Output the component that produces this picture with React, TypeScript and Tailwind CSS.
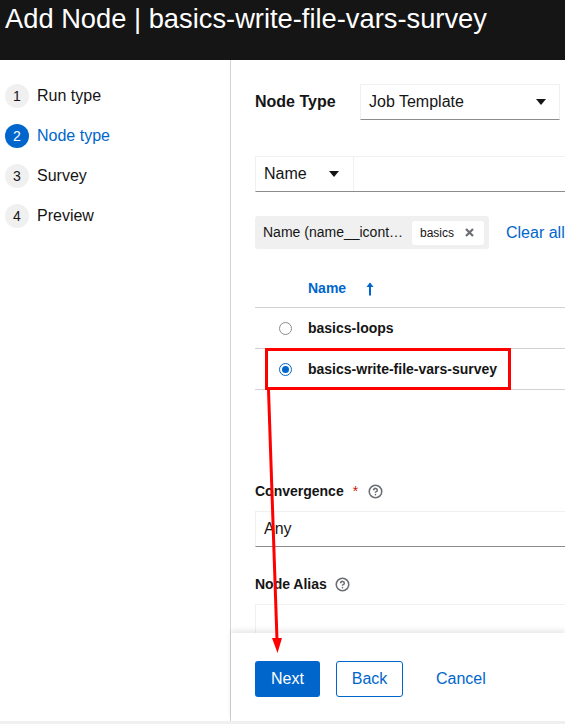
import { CircleHelp } from "lucide-react";

const steps = [
  { n: 1, label: "Run type" },
  { n: 2, label: "Node type", active: true },
  { n: 3, label: "Survey" },
  { n: 4, label: "Preview" },
];

function Caret() {
  return (
    <svg width="10" height="6" viewBox="0 0 10 6" className="shrink-0">
      <path d="M0 0h10L5 6z" fill="#151515" />
    </svg>
  );
}

function Radio({ checked }: { checked?: boolean }) {
  if (checked) {
    return (
      <span className="flex h-[13px] w-[13px] items-center justify-center rounded-full border-[1.5px] border-[#0066cc] bg-white">
        <span className="h-[7px] w-[7px] rounded-full bg-[#0066cc]" />
      </span>
    );
  }
  return <span className="h-[13px] w-[13px] rounded-full border border-[#8a8d90] bg-white" />;
}

function Help() {
  return <CircleHelp size={15} strokeWidth={2.5} color="#6a6e73" />;
}

export default function App() {
  return (
    <div className="relative flex h-[724px] w-[565px] flex-col overflow-hidden bg-white font-['Liberation_Sans',Arial,sans-serif] text-[#151515]">
      <header className="h-[60px] shrink-0 bg-[#151515] pl-[5px] pt-[1px] text-[27.3px] leading-[36px] text-white whitespace-nowrap">
        Add Node | basics-write-file-vars-survey
      </header>

      <div className="flex min-h-0 flex-1">
        <nav className="w-[231px] shrink-0 border-r border-[#d2d2d2] pl-[5px] pt-[16px]">
          {steps.map((s) => (
            <div key={s.n} className="flex h-10 items-center gap-2">
              <span
                className={
                  s.active
                    ? "flex h-6 w-6 items-center justify-center rounded-full bg-[#0066cc] text-[14px] text-white"
                    : "flex h-6 w-6 items-center justify-center rounded-full bg-[#f0f0f0] text-[14px] text-[#151515]"
                }
              >
                {s.n}
              </span>
              <span className={s.active ? "text-[16px] text-[#0066cc]" : "text-[16px] text-[#151515]"}>
                {s.label}
              </span>
            </div>
          ))}
        </nav>

        <main className="flex min-w-0 flex-1 flex-col">
          <div className="min-h-0 flex-1 overflow-hidden pl-[24px] pt-[24px]">
            <div className="flex items-center">
              <span className="w-[105px] text-[16px] font-bold">Node Type</span>
              <div className="flex h-[36px] w-[200px] items-center justify-between border border-[#f0f0f0] border-b-[#8a8d90] pl-[8px] pr-[13px] text-[16px]">
                Job Template
                <Caret />
              </div>
            </div>

            <div className="mt-[36px] flex h-[36px] border border-r-0 border-[#f0f0f0] border-b-[#8a8d90]">
              <div className="flex w-[98px] items-center justify-between border-r border-[#f0f0f0] pl-[8px] pr-[14px] text-[16px]">
                Name
                <Caret />
              </div>
              <div className="flex-1" />
            </div>

            <div className="mt-[24px] flex items-center whitespace-nowrap">
              <div className="flex h-[33px] w-[234px] items-center rounded-[3px] bg-[#f0f0f0] pl-[8px] text-[14px]">
                <span className="w-[149px]">Name (name__icont…</span>
                <span className="flex h-[24px] w-[72px] items-center justify-between rounded-[3px] bg-white pl-[8px] pr-[10px] text-[12px]">
                  basics
                  <svg width="9" height="9" viewBox="0 0 9 9">
                    <path d="M1 1l7 7M8 1l-7 7" stroke="#6a6e73" strokeWidth="2.2" />
                  </svg>
                </span>
              </div>
              <span className="ml-[17px] text-[16px] text-[#0066cc]">Clear all</span>
            </div>

            <div className="flex h-[59px] items-center border-b border-[#d2d2d2] pl-[53px] pt-[21px] text-[14px] font-bold text-[#0066cc]">
              Name
              <svg width="8" height="14" viewBox="0 0 8 14" className="ml-[20px]">
                <path d="M4 1.5V13.5" stroke="#0066cc" strokeWidth="2" />
                <path d="M0.5 5L4 0.5L7.5 5z" fill="#0066cc" />
              </svg>
            </div>
            <div className="flex h-[41px] items-center border-b border-[#d2d2d2] pl-[24px] text-[14px] font-bold">
              <Radio />
              <span className="ml-[16px]">basics-loops</span>
            </div>
            <div className="flex h-[41px] items-center border-b border-[#d2d2d2] pl-[24px] text-[14px] font-bold">
              <Radio checked />
              <span className="ml-[16px]">basics-write-file-vars-survey</span>
            </div>

            <div className="mt-[91px] flex h-[20px] items-center text-[14px] font-bold">
              Convergence
              <span className="ml-[9px] font-normal text-[#c9190b]">*</span>
              <span className="ml-[10px]">
                <Help />
              </span>
            </div>
            <div className="mt-[10px] flex h-[36px] items-center border border-r-0 border-[#f0f0f0] border-b-[#8a8d90] pl-[8px] text-[16px]">
              Any
            </div>

            <div className="mt-[27px] flex h-[20px] items-center text-[14px] font-bold">
              Node Alias
              <span className="ml-[8px]">
                <Help />
              </span>
            </div>
            <div className="mt-[10px] h-[36px] border border-r-0 border-[#f0f0f0] border-b-[#8a8d90]" />
          </div>

          <footer className="relative flex h-[88px] shrink-0 items-center gap-4 bg-white pl-[24px] pt-[4px] shadow-[0_-3px_5px_rgba(3,3,3,0.09)]">
            <button className="h-[36px] w-[65px] rounded-[3px] bg-[#0066cc] text-[16px] text-white">Next</button>
            <button className="h-[36px] w-[67px] rounded-[3px] border border-[#0066cc] text-[16px] text-[#0066cc]">
              Back
            </button>
            <button className="ml-[17px] text-[16px] text-[#0066cc]">Cancel</button>
          </footer>
        </main>
      </div>
      <div className="h-[3px] shrink-0 bg-[#f0f0f0]" />

      <div className="pointer-events-none absolute left-[265px] top-[348px] h-[42px] w-[246px] border-[3px] border-[#ff0000]" />
      <svg className="pointer-events-none absolute left-0 top-0" width="565" height="724">
        <path d="M268.5 390L277 640" stroke="#ff0000" strokeWidth="3" />
        <path d="M272 638L282 638L277.5 653z" fill="#ff0000" />
      </svg>
    </div>
  );
}
